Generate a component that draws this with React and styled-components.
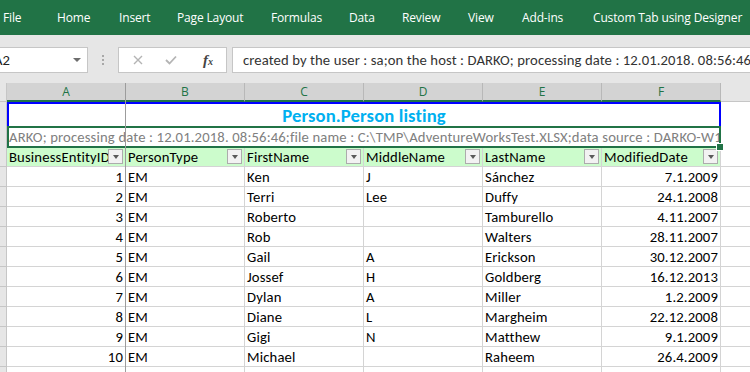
import React from 'react';
import styled, { createGlobalStyle } from 'styled-components';

const Global = createGlobalStyle`
  html, body { margin: 0; padding: 0; background: #fff; }
  body { width: 750px; height: 372px; overflow: hidden; }
`;

const CELL_FONT = `Calibri, Carlito, Lato, "Liberation Sans", sans-serif`;
const UI_FONT = `"Segoe UI", "Open Sans", "Noto Sans", sans-serif`;
const GREEN = '#217346';
const GRID = '#d4d4d4';
const COLS = '7px repeat(7, 119px)';

const Page = styled.div`
  width: 750px;
  height: 372px;
  overflow: hidden;
  display: flex;
  flex-direction: column;
  background: #e6e6e6;
`;

const Ribbon = styled.div`
  height: 35px;
  flex: none;
  background: ${GREEN};
  display: flex;
  align-items: center;
  padding-left: 3px;
  padding-bottom: 1px;
  box-sizing: border-box;
`;

const Tab = styled.div`
  width: ${p => p.$w}px;
  flex: none;
  color: #fff;
  font-family: ${UI_FONT};
  font-size: 12px;
  letter-spacing: -0.15px;
  white-space: nowrap;
`;

const FormulaArea = styled.div`
  height: 48px;
  flex: none;
  display: flex;
  align-items: flex-start;
  padding-top: 12px;
  box-sizing: border-box;
  background: #e6e6e6;
`;

const NameBox = styled.div`
  width: 98px;
  height: 26px;
  margin-left: -10px;
  box-sizing: border-box;
  border: 1px solid #c6c6c6;
  background: #fff;
  display: flex;
  align-items: center;
  justify-content: space-between;
  padding: 0 6px 0 3px;
  font-family: ${CELL_FONT};
  font-size: 14.67px;
  color: #222;
`;

const Caret = styled.span`
  width: 0;
  height: 0;
  border-left: 4px solid transparent;
  border-right: 4px solid transparent;
  border-top: 4px solid #6d6d6d;
`;

const Dots = styled.div`
  width: 30px;
  height: 26px;
  display: flex;
  flex-direction: column;
  align-items: center;
  justify-content: center;
  gap: 2px;
`;

const Dot = styled.span`
  width: 2px;
  height: 2px;
  background: #a8a8a8;
`;

const ButtonBox = styled.div`
  width: 109px;
  height: 26px;
  box-sizing: border-box;
  border: 1px solid #c6c6c6;
  background: #fff;
  display: flex;
  align-items: center;
  padding-left: 14px;
  gap: 22px;
`;

const Fx = styled.span`
  font-family: "Liberation Serif", serif;
  font-style: italic;
  font-weight: bold;
  font-size: 15px;
  color: #444;
  margin-left: 4px;
  small { font-size: 10px; }
`;

const FormulaInput = styled.div`
  flex: 1;
  height: 26px;
  margin-left: 5px;
  box-sizing: border-box;
  border: 1px solid #c6c6c6;
  border-right: none;
  background: #fff;
  display: flex;
  align-items: center;
  padding-left: 10px;
  overflow: hidden;
  white-space: nowrap;
  font-family: ${CELL_FONT};
  font-size: 14.67px;
  letter-spacing: 0.1px;
  color: #333;
`;

const Sheet = styled.div`
  flex: 1;
  position: relative;
  overflow: hidden;
  background: #fff;
`;

const Row = styled.div`
  display: grid;
  grid-template-columns: ${COLS};
  height: ${p => p.$h}px;
`;

const ColHead = styled.div`
  box-sizing: border-box;
  background: ${p => (p.$sel ? '#d3d3d3' : '#e6e6e6')};
  border-right: 1px solid ${p => (p.$sel ? '#b8b8b8' : '#c6c6c6')};
  border-bottom: ${p => (p.$sel ? `2px solid ${GREEN}` : '1px solid #c6c6c6')};
  color: ${p => (p.$sel ? GREEN : '#444')};
  font-family: ${UI_FONT};
  font-size: 12px;
  display: flex;
  align-items: center;
  justify-content: center;
`;

const RowHead = styled.div`
  box-sizing: border-box;
  background: #e6e6e6;
  border-right: 1px solid #c6c6c6;
  border-bottom: 1px solid #c6c6c6;
`;

const Cell = styled.div`
  box-sizing: border-box;
  border-right: 1px solid ${GRID};
  border-bottom: 1px solid ${GRID};
  background: ${p => (p.$head ? '#ccfccc' : '#fff')};
  font-family: ${CELL_FONT};
  font-size: 14.67px;
  letter-spacing: 0.15px;
  color: #000;
  display: flex;
  align-items: center;
  justify-content: ${p => (p.$right ? 'flex-end' : 'flex-start')};
  padding: 0 2px 0 2px;
  white-space: nowrap;
  overflow: hidden;
`;

const HeadText = styled.span`
  flex: 1;
  overflow: hidden;
  white-space: nowrap;
`;

const Drop = styled.span`
  flex: none;
  width: 15px;
  height: 15px;
  box-sizing: border-box;
  border: 1px solid #acacac;
  background: #f2f2f2;
  display: flex;
  align-items: center;
  justify-content: center;
  &::after {
    content: '';
    width: 0;
    height: 0;
    border-left: 3.5px solid transparent;
    border-right: 3.5px solid transparent;
    border-top: 4px solid #5a5a5a;
  }
`;

const TitleCell = styled.div`
  grid-column: 2 / span 6;
  box-sizing: border-box;
  border-top: 2px solid #0000ff;
  border-left: 2px solid #0000ff;
  border-right: 2px solid #0000ff;
  display: flex;
  align-items: center;
  justify-content: center;
  font-family: ${CELL_FONT};
  font-weight: bold;
  font-size: 18.67px;
  letter-spacing: 0.1px;
  color: #00b0f0;
  background: #fff;
`;

const InfoCell = styled.div`
  grid-column: 2 / span 6;
  position: relative;
  box-sizing: border-box;
  border: 2px solid ${GREEN};
  display: flex;
  align-items: center;
  font-family: ${CELL_FONT};
  font-size: 14.67px;
  letter-spacing: 0.15px;
  color: #808080;
  background: #fff;
`;

const InfoText = styled.span`
  overflow: hidden;
  white-space: nowrap;
  display: block;
  width: 100%;
`;

const Handle = styled.span`
  position: absolute;
  right: -5px;
  bottom: -5px;
  width: 6px;
  height: 6px;
  background: ${GREEN};
  border: 1px solid #fff;
`;

const FreezeLine = styled.div`
  position: absolute;
  left: 125px;
  top: 0;
  bottom: 0;
  width: 1px;
  background: #9c9c9c;
`;

const tabs = [
  ['File', 54], ['Home', 62], ['Insert', 58], ['Page Layout', 94], ['Formulas', 78],
  ['Data', 53], ['Review', 66], ['View', 54], ['Add-ins', 71], ['Custom Tab using Designer', 157],
];

const headers = ['BusinessEntityID', 'PersonType', 'FirstName', 'MiddleName', 'LastName', 'ModifiedDate'];

const data = [
  [1, 'EM', 'Ken', 'J', 'Sánchez', '7.1.2009'],
  [2, 'EM', 'Terri', 'Lee', 'Duffy', '24.1.2008'],
  [3, 'EM', 'Roberto', '', 'Tamburello', '4.11.2007'],
  [4, 'EM', 'Rob', '', 'Walters', '28.11.2007'],
  [5, 'EM', 'Gail', 'A', 'Erickson', '30.12.2007'],
  [6, 'EM', 'Jossef', 'H', 'Goldberg', '16.12.2013'],
  [7, 'EM', 'Dylan', 'A', 'Miller', '1.2.2009'],
  [8, 'EM', 'Diane', 'L', 'Margheim', '22.12.2008'],
  [9, 'EM', 'Gigi', 'N', 'Matthew', '9.1.2009'],
  [10, 'EM', 'Michael', '', 'Raheem', '26.4.2009'],
  ['', '', '', '', '', ''],
];

export default function App() {
  return (
    <Page>
      <Global />
      <Ribbon>
        {tabs.map(([t, w]) => (
          <Tab key={t} $w={w}>{t}</Tab>
        ))}
      </Ribbon>
      <FormulaArea>
        <NameBox>
          <span>A2</span>
          <Caret />
        </NameBox>
        <Dots><Dot /><Dot /><Dot /></Dots>
        <ButtonBox>
          <svg width="10" height="10" viewBox="0 0 10 10">
            <path d="M1 1 L9 9 M9 1 L1 9" stroke="#b4b4b4" strokeWidth="1.4" fill="none" />
          </svg>
          <svg width="12" height="10" viewBox="0 0 12 10">
            <path d="M1 5 L4.5 8.5 L11 1.5" stroke="#b4b4b4" strokeWidth="1.8" fill="none" />
          </svg>
          <Fx>f<small>x</small></Fx>
        </ButtonBox>
        <FormulaInput>
          created by the user : sa;on the host : DARKO; processing date : 12.01.2018. 08:56:46;
        </FormulaInput>
      </FormulaArea>
      <Sheet>
        <Row $h={19}>
          <ColHead />
          {['A', 'B', 'C', 'D', 'E', 'F'].map(l => (
            <ColHead key={l} $sel>{l}</ColHead>
          ))}
          <ColHead>G</ColHead>
        </Row>
        <Row $h={24}>
          <RowHead />
          <TitleCell>Person.Person listing</TitleCell>
          <Cell />
        </Row>
        <Row $h={21}>
          <RowHead />
          <InfoCell>
            <InfoText>
              ARKO; processing date : 12.01.2018. 08:56:46;file name : C:\TMP\AdventureWorksTest.XLSX;data source : DARKO-W10\SQL2016
            </InfoText>
            <Handle />
          </InfoCell>
          <Cell />
        </Row>
        <Row $h={20}>
          <RowHead />
          {headers.map(h => (
            <Cell key={h} $head>
              <HeadText>{h}</HeadText>
              <Drop />
            </Cell>
          ))}
          <Cell />
        </Row>
        {data.map((r, i) => (
          <Row key={i} $h={20}>
            <RowHead />
            <Cell $right>{r[0]}</Cell>
            <Cell>{r[1]}</Cell>
            <Cell>{r[2]}</Cell>
            <Cell>{r[3]}</Cell>
            <Cell>{r[4]}</Cell>
            <Cell $right>{r[5]}</Cell>
            <Cell />
          </Row>
        ))}
        <FreezeLine />
      </Sheet>
    </Page>
  );
}
